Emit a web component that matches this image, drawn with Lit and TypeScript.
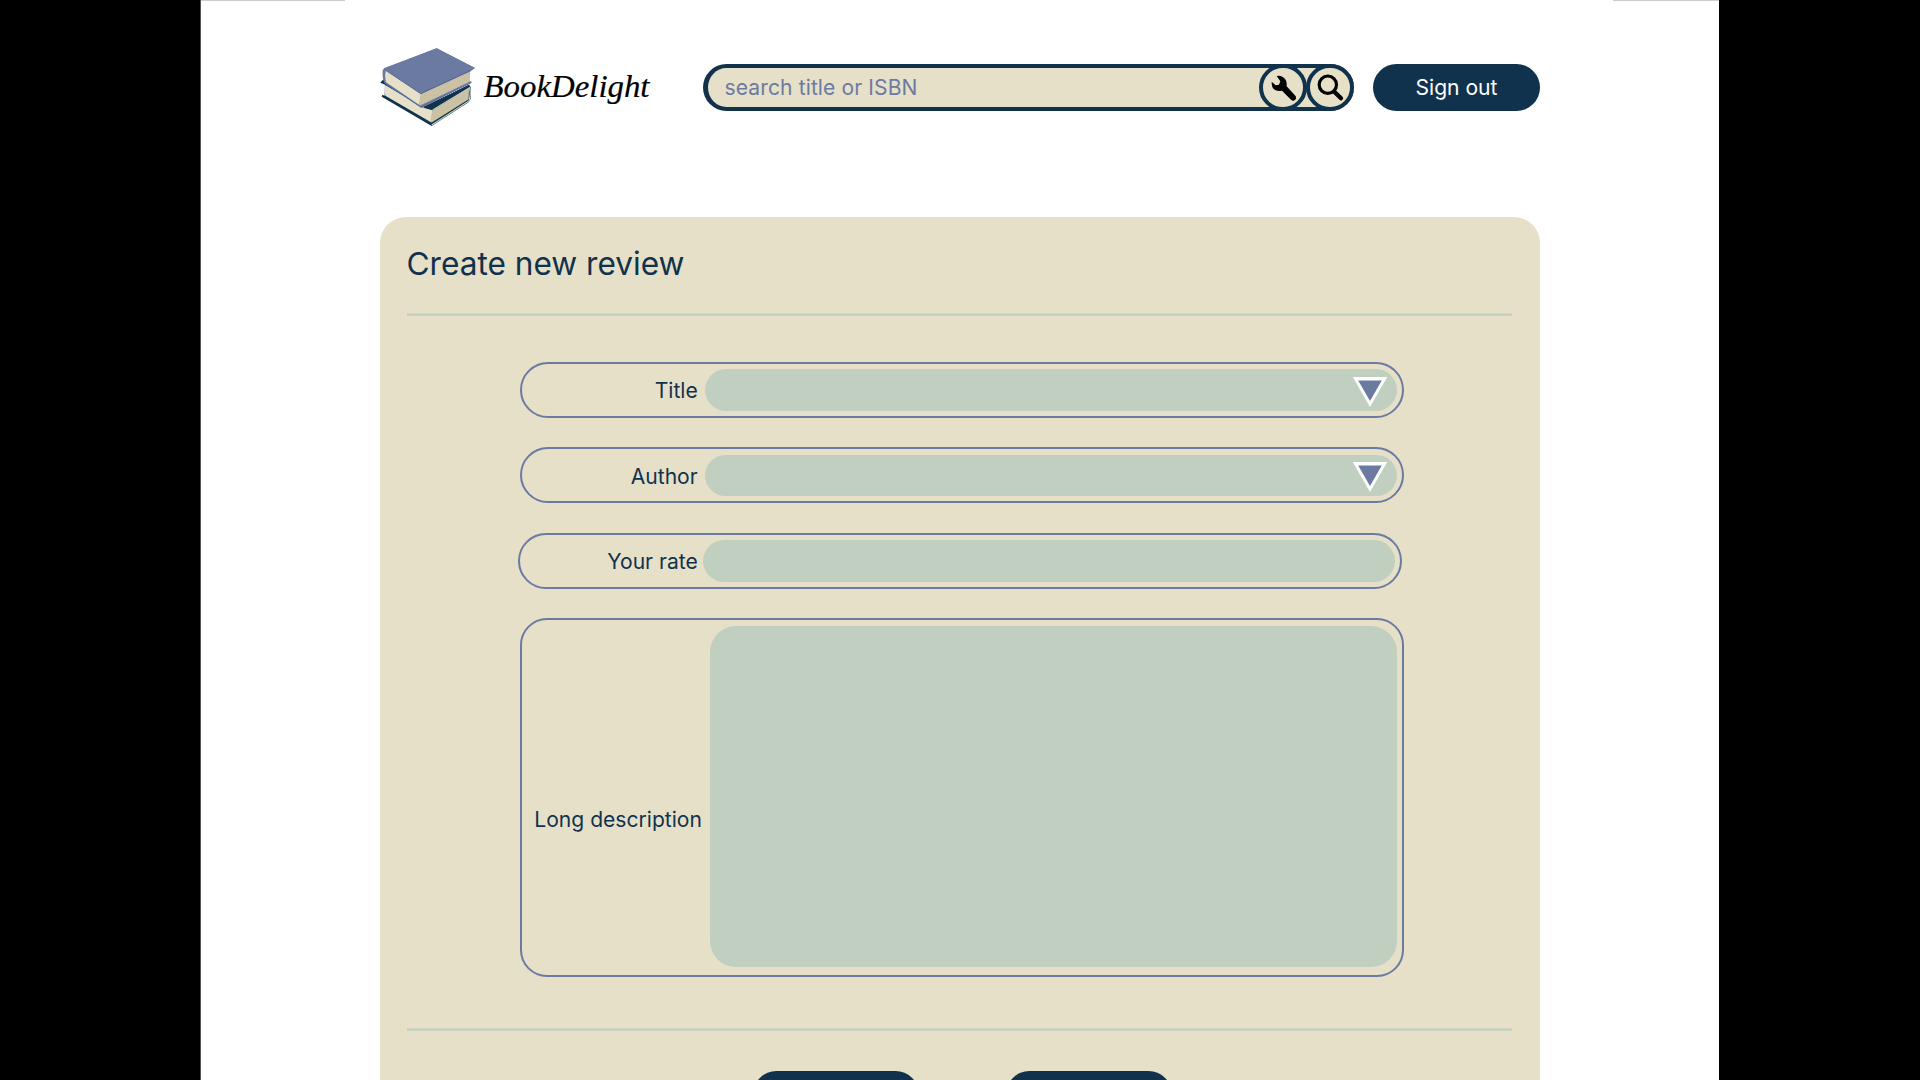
import { LitElement, html, css, svg } from "lit";
import { customElement, property } from "lit/decorators.js";

@customElement("book-logo")
class BookLogo extends LitElement {
  static styles = css`
    :host { display: flex; width: 281px; height: 80px; }
    .mark { width: 96.67px; height: 80px; flex: none; }
    .word { width: 184px; height: 80px; flex: none; overflow: visible; }
    .name { font: italic 32px "Liberation Serif", "Times New Roman", serif; fill: #000; stroke: #000; stroke-width: 0.2px; }
  `;
  render() {
    return html`
      <svg class="mark" viewBox="30 50 290 240">
        <path d="M37 150 L45 148 L160 232 L296 163 L302 170 L302 205 L297 215 L185 287 L35 199 L37 193 L44 196 L45 163 L31 157Z" fill="#11324d" />
        <path d="M46 164 Q41 180 46 196 L183 276 L189 240 L160 232Z" fill="#e7e0c9" />
        <path d="M158 230 L189 240 L297 174 L299 163Z" fill="#11324d" />
        <path d="M189 240 L297 174 L296 207 L184 277 Q180 260 189 240Z" fill="#cbc1a5" />
        <path d="M188 239 L299 172 Q303 190 298 211 L185 284" fill="none" stroke="#c1cfc0" stroke-width="3.5" />
        <path d="M38 120 L43 113 L200 54 L315 113 L299 125 L298 151 L306 155 L154 233 L45 160 Q36 150 38 120Z" fill="#6b7aa1" />
        <path d="M47 120 Q43 138 48 156 L148 224 L153 191Z" fill="#e7e0c9" />
        <path d="M153 191 L299 124 Q295 138 299 154 L149 226 Q147 208 153 191Z" fill="#cbc1a5" />
        <path d="M44 118 L152 190 L300 121" fill="none" stroke="#4b5b94" stroke-width="2.5" />
        <path d="M46 158 L153 230 L304 157" fill="none" stroke="#596aa0" stroke-width="3" />
        <path d="M43 115 L200 54 L315 113 L153 188Z" fill="#6b7aa1" />
      </svg>
      <svg class="word" viewBox="0 0 184 80">
        <text class="name" x="6.5" y="50" textLength="166" lengthAdjust="spacingAndGlyphs">BookDelight</text>
      </svg>
    `;
  }
}

@customElement("review-field")
class ReviewField extends LitElement {
  @property() label = "";
  @property({ type: Boolean }) select = false;
  static styles = css`
    :host { display: flex; box-sizing: border-box; height: 56px; border: 2px solid #6b7aa1; border-radius: 28px; padding: 5px 4.8px 5px 0; align-items: center; width: 884px; }
    .label { flex: 1; text-align: right; padding: 2.5px 7px 0 0; font-size: 21.08px; line-height: 26px; white-space: nowrap; }
    .box { width: 692.5px; height: 41.6px; border-radius: 21px; background: #c1cfc0; display: flex; align-items: center; justify-content: flex-end; flex: none; }
    .arrow { width: 36px; height: 32px; margin: 3px 9.5px 0 0; }
    :host([tall]) { height: 358.6px; border-radius: 27px; }
    :host([tall]) .label { padding-top: 45.4px; padding-right: 8px; }
    :host([tall]) .box { width: 687.3px; height: 341px; border-radius: 26px; margin-bottom: 2px; }
    :host([shifted]) .label { padding-right: 5px; }
  `;
  render() {
    return html`
      <div class="label">${this.label}</div>
      <div class="box">
        ${this.select
          ? html`<svg class="arrow" viewBox="0 0 36 32">
              <path d="M0.8 1 H35.2 L18 31Z" fill="#fff" />
              <path d="M6.2 4.5 H29.8 L18 25Z" fill="#6b7aa1" />
            </svg>`
          : ""}
      </div>
    `;
  }
}

const wrench = svg`<path d="M53 36 Q62 34 70 38 Q82 44 83 58 L83 67 L109 95 Q114 101 108 108 Q102 113 96 107 L69 80 Q58 83 47 77 Q37 70 38 53 L50 64 L60 62 L64 52Z" fill="#000" />`;
const lens = svg`<circle cx="65.5" cy="62" r="26" fill="none" stroke="#000" stroke-width="9.5" />
  <path d="M85 83 L105 103" stroke="#000" stroke-width="13" stroke-linecap="round" />`;

@customElement("app-root")
class AppRoot extends LitElement {
  static styles = css`
    :host { display: block; background: #000; height: 1080px; overflow: hidden; font-family: Inter, "Liberation Sans", sans-serif; color: #11324d; }
    .page { box-sizing: border-box; margin-left: 200px; width: 1519px; height: 1080px; border-left: 1px solid #555; background: #fff; display: flex; flex-direction: column; }
    .edge { display: flex; justify-content: space-between; height: 1px; flex: none; }
    .line { height: 1px; background: #ccc; }
    .left { width: 144px; }
    .right { width: 106px; }
    .header { display: flex; align-items: center; flex: none; height: 80px; width: 1161px; margin: 46.5px 0 0 179px; }
    .logo { margin-top: -2px; }
    .search { box-sizing: border-box; display: flex; align-items: center; width: 651px; height: 47px; border: solid #11324d; border-width: 4px 0 4px 5px; border-radius: 24px; background: #e7e0c9; margin-left: 42px; }
    .hint { flex: 1; padding: 1px 0 0 16.5px; font-size: 21.08px; letter-spacing: 0.1px; line-height: 26px; color: #6b7aa1; }
    .round { box-sizing: border-box; width: 48px; height: 47px; border-radius: 24px; border: 4px solid #11324d; background: #e7e0c9; flex: none; }
    .round + .round { margin-left: -1px; }
    .icon { display: block; width: 48px; height: 48px; margin: -4px; }
    .button { width: 167px; height: 47px; border-radius: 24px; background: #11324d; color: #fff; font-size: 21.08px; line-height: 48px; text-align: center; flex: none; }
    .signout { margin-left: 19px; }
    .card { width: 1160px; margin: 89.5px 0 0 179px; flex: 1; box-sizing: border-box; background: #e7e0c9; border-radius: 26px 26px 0 0; padding: 26px 28px 0 27px; display: flex; flex-direction: column; }
    .title { font-size: 31.62px; line-height: 42px; height: 70px; font-weight: 400; margin: 0 0 0 -0.5px; flex: none; }
    .rule { height: 3px; background: linear-gradient(#cfd6c4 0 1px, #c1cfc0 1px 2px, #cbd3c3 2px); flex: none; }
    .form { display: flex; flex-direction: column; gap: 29.4px; padding: 46px 0 51.2px 113px; flex: none; }
    .shifted { margin-left: -2px; }
    .actions { display: flex; gap: 87px; padding: 39.6px 0 0 345.5px; }
    .actions .button { width: 166px; }
  `;
  render() {
    return html`
      <div class="page">
        <div class="edge"><div class="line left"></div><div class="line right"></div></div>
        <div class="header">
          <book-logo class="logo"></book-logo>
          <div class="search">
            <div class="hint">search title or ISBN</div>
            <div class="round"><svg class="icon" viewBox="0 0 144 144">${wrench}</svg></div>
            <div class="round"><svg class="icon" viewBox="0 0 144 144">${lens}</svg></div>
          </div>
          <div class="button signout">Sign out</div>
        </div>
        <div class="card">
          <h1 class="title">Create new review</h1>
          <div class="rule"></div>
          <div class="form">
            <review-field label="Title" select></review-field>
            <review-field label="Author" select></review-field>
            <review-field class="shifted" shifted label="Your rate"></review-field>
            <review-field tall label="Long description"></review-field>
          </div>
          <div class="rule"></div>
          <div class="actions"><div class="button"></div><div class="button"></div></div>
        </div>
      </div>
    `;
  }
}
